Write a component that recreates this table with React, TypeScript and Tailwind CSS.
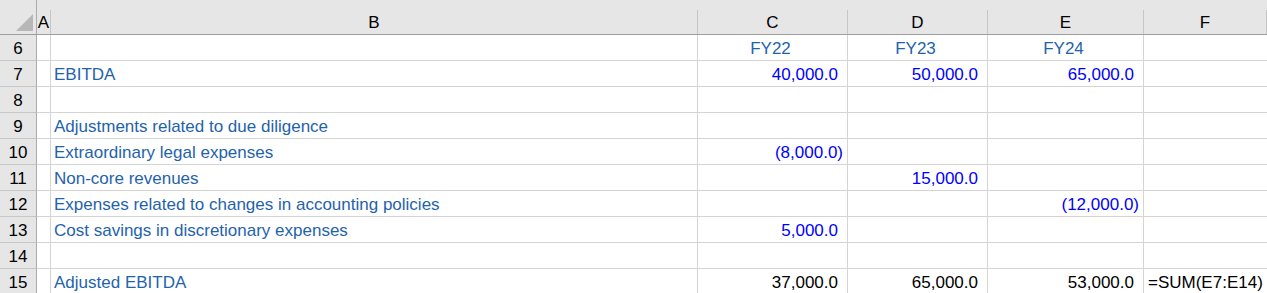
type Row = {
  n: number
  b?: string
  c?: string
  d?: string
  e?: string
  f?: string
  years?: boolean
  total?: boolean
}

const ROWS: Row[] = [
  { n: 6, c: "FY22", d: "FY23", e: "FY24", years: true },
  { n: 7, b: "EBITDA", c: "40,000.0", d: "50,000.0", e: "65,000.0" },
  { n: 8 },
  { n: 9, b: "Adjustments related to due diligence" },
  { n: 10, b: "Extraordinary legal expenses", c: "(8,000.0)" },
  { n: 11, b: "Non-core revenues", d: "15,000.0" },
  { n: 12, b: "Expenses related to changes in accounting policies", e: "(12,000.0)" },
  { n: 13, b: "Cost savings in discretionary expenses", c: "5,000.0" },
  { n: 14 },
  { n: 15, b: "Adjusted EBITDA", c: "37,000.0", d: "65,000.0", e: "53,000.0", f: "=SUM(E7:E14)", total: true },
]

const GRID = "grid grid-cols-[37px_14px_647px_150px_140px_156px_1fr]"

const ColHead = ({ label }: { label: string }) => (
  <div className="h-[34px] pt-[10px]">
    <div className="h-[24px] border-r border-[#c6c6c6] text-center leading-[24px] pt-[1px] text-black">
      {label}
    </div>
  </div>
)

const NumCell = ({ value, row }: { value?: string; row: Row }) => {
  if (!value) return <div className="h-[26px] border-r border-b border-[#d4d4d4]" />
  if (row.years)
    return (
      <div className="h-[26px] border-r border-b border-[#d4d4d4] text-center pr-[4px] pt-[2px] leading-[24px] text-[#1f63ad]">
        {value}
      </div>
    )
  const negative = value.startsWith("(")
  return (
    <div
      className={`h-[26px] border-r border-b border-[#d4d4d4] text-right pt-[2px] leading-[24px] whitespace-nowrap ${
        negative ? "pr-[4px]" : "pr-[9px]"
      } ${row.total ? "text-black" : "text-[#0000ff]"}`}
    >
      {value}
    </div>
  )
}

export default function App() {
  return (
    <div className="w-[1267px] h-[293px] overflow-hidden bg-white font-['Liberation_Sans',Arial,sans-serif] text-[17px]">
      {/* column headers */}
      <div className={`${GRID} bg-[#e6e6e6] border-b border-[#9e9e9e]`}>
        <div className="h-[34px] border-r border-[#ababab] relative">
          <svg className="absolute left-0 top-0" width="36" height="34" viewBox="0 0 36 34">
            <polygon points="16,31 33,31 33,14" fill="#b7b7b7" />
          </svg>
        </div>
        <ColHead label="A" />
        <ColHead label="B" />
        <ColHead label="C" />
        <ColHead label="D" />
        <ColHead label="E" />
        <ColHead label="F" />
      </div>

      {ROWS.map((row) => (
        <div key={row.n} className={GRID}>
          <div className="h-[26px] bg-[#e6e6e6] border-r border-b border-r-[#ababab] border-b-[#c6c6c6] text-center pt-[2px] leading-[24px] text-black">
            {row.n}
          </div>
          <div className="h-[26px] border-r border-b border-[#d4d4d4]" />
          <div className="h-[26px] border-r border-b border-[#d4d4d4] pl-[3px] pt-[2px] leading-[24px] text-[#1f63ad] whitespace-nowrap">
            {row.b}
          </div>
          <NumCell value={row.c} row={row} />
          <NumCell value={row.d} row={row} />
          <NumCell value={row.e} row={row} />
          <div className="h-[26px] border-b border-[#d4d4d4] pl-[4px] pt-[2px] leading-[24px] text-black whitespace-nowrap overflow-hidden">
            {row.f}
          </div>
        </div>
      ))}
    </div>
  )
}
